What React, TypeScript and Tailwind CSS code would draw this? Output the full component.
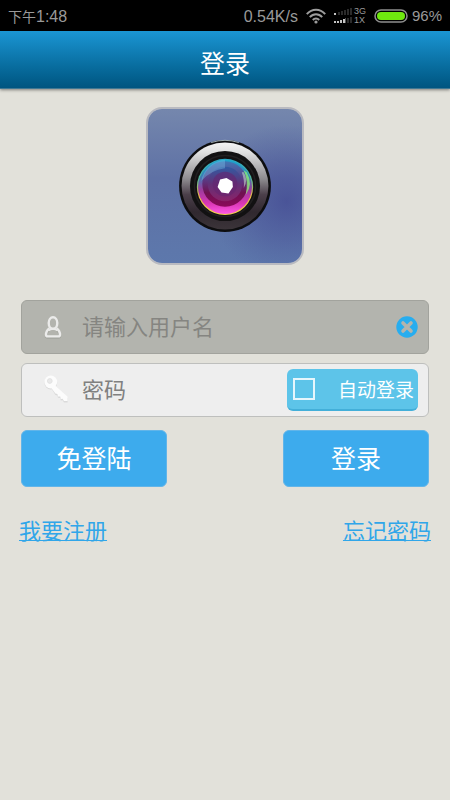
import React, { useState } from 'react';

const WifiIcon: React.FC = () => (
  <svg width="20" height="16" viewBox="0 0 20 16" fill="none" stroke="#9d9d9d" strokeWidth="2" aria-hidden="true">
    <path d="M0.8 6.2C6 0.4 14 0.4 19.2 6.2" />
    <path d="M3.8 9.2C7.4 5.2 12.6 5.2 16.2 9.2" />
    <path d="M6.8 12C8.6 10 11.4 10 13.2 12" />
    <circle cx="10" cy="14" r="1.6" fill="#9d9d9d" stroke="none" />
  </svg>
);

const SignalIcon: React.FC = () => (
  <svg width="18" height="16" viewBox="0 0 18 16" aria-hidden="true">
    <g fill="#2b2b2b">
      <rect x="4" y="4" width="2" height="3" />
      <rect x="7" y="3" width="2" height="4" />
      <rect x="10" y="2" width="2" height="5" />
      <rect x="13" y="1" width="2" height="6" />
      <rect x="16" y="0" width="2" height="7" />
      <rect x="13" y="10" width="2" height="5" />
      <rect x="16" y="9" width="2" height="6" />
    </g>
    <g fill="#c4c4c4">
      <rect x="0" y="5" width="2" height="2" />
      <rect x="0" y="13" width="2" height="2" />
      <rect x="3" y="13" width="2" height="2" />
      <rect x="6" y="12" width="2" height="3" />
      <rect x="9" y="11" width="2" height="4" />
    </g>
    <rect x="11" y="10" width="1" height="5" fill="#555555" />
  </svg>
);

const BatteryIcon: React.FC = () => (
  <svg width="34" height="14" viewBox="0 0 34 14" aria-hidden="true">
    <rect x="1" y="1" width="32" height="12" rx="6" fill="#000000" stroke="#8f8f8f" strokeWidth="1.5" />
    <rect x="3" y="3" width="28" height="8" rx="4" fill="#6fe80f" />
  </svg>
);

const StatusBar: React.FC = () => (
  <div className="flex h-[31px] items-center justify-between bg-black px-2 text-base text-[#9a9a9a]">
    <div className="flex items-center pt-0.5">
      <span className="text-sm">下午</span>
      <span>1:48</span>
    </div>
    <div className="flex items-center">
      <span className="mr-2 pt-0.5 text-base">0.54K/s</span>
      <WifiIcon />
      <span className="ml-2">
        <SignalIcon />
      </span>
      <span className="ml-0.5 mr-2 flex flex-col text-[9px] leading-[9px]">
        <span>3G</span>
        <span>1X</span>
      </span>
      <BatteryIcon />
      <span className="ml-1 pt-0.5 text-[15px]">96%</span>
    </div>
  </div>
);

const LensLogo: React.FC = () => (
  <svg
    viewBox="0 0 156 156"
    className="block size-[158px] rounded-2xl border-2 border-[#b9bac0]"
    role="img"
    aria-label="Logo"
  >
    <defs>
      <linearGradient id="backdrop" x1="0" y1="0" x2="0" y2="1">
        <stop offset="0" stopColor="#7587ad" />
        <stop offset="0.45" stopColor="#5e71a5" />
        <stop offset="1" stopColor="#5d78ac" />
      </linearGradient>
      <radialGradient id="dusk" cx="0.9" cy="0.6" r="0.5">
        <stop offset="0" stopColor="#434a93" stopOpacity="0.75" />
        <stop offset="0.5" stopColor="#474f96" stopOpacity="0.4" />
        <stop offset="1" stopColor="#4c5a9a" stopOpacity="0" />
      </radialGradient>
      <linearGradient id="metal" x1="0" y1="0" x2="0" y2="1">
        <stop offset="0" stopColor="#f4f4f4" />
        <stop offset="0.12" stopColor="#dedede" />
        <stop offset="0.42" stopColor="#8d8b8f" />
        <stop offset="0.6" stopColor="#4b3f4a" />
        <stop offset="0.8" stopColor="#30282f" />
        <stop offset="1" stopColor="#3b3439" />
      </linearGradient>
      <linearGradient id="rim" x1="0" y1="0" x2="0" y2="1">
        <stop offset="0" stopColor="#29a5c4" />
        <stop offset="0.35" stopColor="#51b99a" />
        <stop offset="0.65" stopColor="#e6b64b" />
        <stop offset="1" stopColor="#f0d34a" />
      </linearGradient>
      <linearGradient id="glass" x1="0" y1="0" x2="0" y2="1">
        <stop offset="0" stopColor="#1ba6cf" />
        <stop offset="0.3" stopColor="#397eb5" />
        <stop offset="0.55" stopColor="#9b3c9c" />
        <stop offset="0.8" stopColor="#d936b4" />
        <stop offset="1" stopColor="#ff59e5" />
      </linearGradient>
      <linearGradient id="inner" x1="0" y1="0" x2="0" y2="1">
        <stop offset="0" stopColor="#4277b5" />
        <stop offset="0.4" stopColor="#5b3a85" />
        <stop offset="0.7" stopColor="#701050" />
        <stop offset="1" stopColor="#8b0a5b" />
      </linearGradient>
      <linearGradient id="core" x1="0" y1="0" x2="0" y2="1">
        <stop offset="0" stopColor="#315ba3" />
        <stop offset="0.5" stopColor="#623177" />
        <stop offset="1" stopColor="#8a2269" />
      </linearGradient>
    </defs>
    <rect width="156" height="156" fill="url(#backdrop)" />
    <rect width="156" height="156" fill="url(#dusk)" />
    <circle cx="78" cy="78" r="46.5" fill="#0d0d0f" />
    <path d="M64 34Q78 29.5 92 34" fill="none" stroke="#c3d2d8" strokeWidth="0.8" />
    <circle cx="78" cy="78" r="44" fill="url(#metal)" />
    <circle cx="78" cy="78" r="35.5" fill="#121112" />
    <circle cx="78" cy="78" r="31" fill="none" stroke="#211f20" strokeWidth="1.5" />
    <circle cx="78" cy="79" r="28.5" fill="url(#rim)" />
    <circle cx="78" cy="79" r="27.3" fill="url(#glass)" />
    <circle cx="78" cy="76" r="23" fill="url(#inner)" />
    <circle cx="78" cy="76" r="17.5" fill="url(#core)" />
    <circle cx="78" cy="76" r="12.5" fill="#66256f" opacity="0.6" />
    <path d="M78 51.5A26 26 0 0 0 54 73Q63 62 78 60Z" fill="#78bfe6" opacity="0.4" />
    <path d="M97 62Q102 73 99 87Q107 76 100 64Z" fill="#8dff70" opacity="0.7" />
    <path d="M95 64Q98 72 97 80Q102 72 97 64Z" fill="#d9f7d9" opacity="0.5" />
    <path d="M79.5 70L85.5 73.5L86 79L81.5 85.5L74.5 84.5L70.5 79L73 71.5Z" fill="#ffffff" />
  </svg>
);

const UserIcon: React.FC = () => (
  <svg width="18" height="24" viewBox="0 0 18 24" fill="none" strokeLinejoin="round" aria-hidden="true">
    <g stroke="#a3a49e" strokeWidth="2.4" transform="translate(0 1)">
      <path d="M6 13.4C3.4 15 2 17 2 20C2 21 2.5 21.6 3.6 21.6H14.4C15.5 21.6 16 21 16 20C16 17 14.6 15 12 13.4" />
    </g>
    <g stroke="#ebebea" strokeWidth="2.4">
      <ellipse cx="9" cy="8" rx="4.3" ry="5.8" />
      <path d="M5.6 13.2C3.2 14.8 2 17 2 19.8C2 20.9 2.5 21.4 3.6 21.4H14.4C15.5 21.4 16 20.9 16 19.8C16 17 14.8 14.8 12.4 13.2" />
      <path d="M4.4 15.6C7 13.6 11 13.6 13.6 15.6" strokeWidth="1.8" />
    </g>
  </svg>
);

const KeyIcon: React.FC = () => (
  <svg width="26" height="30" viewBox="0 0 26 30" aria-hidden="true">
    <path
      d="M11 12L23.6 23V27.4H20L18.6 25.2L16.8 25.4L16.2 23L14 22.8L13.4 20.4L11.4 20L8 14.4Z"
      fill="#dadada"
    />
    <circle cx="6.8" cy="8" r="6.4" fill="#dadada" />
    <path
      d="M11 10.6L23.6 21.8V26H20L18.6 23.8L16.8 24L16.2 21.6L14 21.4L13.4 19L11.4 18.6L7 12.4Z"
      fill="#fcfcfc"
    />
    <circle cx="6.8" cy="7" r="6.4" fill="#fcfcfc" />
    <circle cx="5.8" cy="6" r="2.4" fill="#e9e9e9" stroke="#dedede" strokeWidth="0.8" />
  </svg>
);

const ClearIcon: React.FC = () => (
  <svg width="22" height="22" viewBox="0 0 22 22" aria-hidden="true">
    <circle cx="11" cy="11" r="10.7" fill="#27adef" />
    <path d="M7 7L15 15M15 7L7 15" stroke="#b3b4ae" strokeWidth="3.6" strokeLinecap="round" />
  </svg>
);

const App: React.FC = () => {
  const [username, setUsername] = useState('');
  const [password, setPassword] = useState('');
  const [autoLogin, setAutoLogin] = useState(false);

  const handleSubmit = (e: React.FormEvent) => {
    e.preventDefault();
  };

  return (
    <div className="min-h-screen bg-[#e2e1da] font-['Liberation_Sans','Noto_Sans_CJK_SC',sans-serif]">
      <StatusBar />
      <header className="flex h-[58px] items-center justify-center border-b border-[#3f7893] bg-linear-to-b from-[#1a96d4] to-[#005580] pt-2 shadow-[0_1px_3px_rgba(0,0,0,0.45)]">
        <h1 className="text-[25px] leading-8 text-white">登录</h1>
      </header>

      <main className="px-[21px] pt-[18px]">
        <div className="flex justify-center">
          <LensLogo />
        </div>

        <form onSubmit={handleSubmit} className="mt-[35px]">
          <div className="flex h-[54px] items-center rounded-md border border-[#a2a39d] bg-[#b3b4ae] pl-[22px] pr-2.5">
            <label htmlFor="username" className="flex w-[38px] shrink-0" aria-label="用户名">
              <UserIcon />
            </label>
            <input
              id="username"
              type="text"
              placeholder="请输入用户名"
              className="min-w-0 flex-1 bg-transparent text-[22px] text-[#444444] outline-none placeholder:text-[#858581]"
              value={username}
              onChange={(e) => setUsername(e.target.value)}
            />
            <button type="button" aria-label="清除" onClick={() => setUsername('')}>
              <ClearIcon />
            </button>
          </div>

          <div className="mt-[9px] flex h-[54px] items-center rounded-md border border-[#bebfbd] bg-[#eeeeee] pl-[22px] pr-2.5">
            <label htmlFor="password" className="flex w-[38px] shrink-0" aria-label="密码">
              <KeyIcon />
            </label>
            <input
              id="password"
              type="password"
              placeholder="密码"
              className="min-w-0 flex-1 bg-transparent text-[22px] text-[#444444] outline-none placeholder:text-[#808080]"
              value={password}
              onChange={(e) => setPassword(e.target.value)}
            />
            <label className="flex h-[42px] w-[131px] shrink-0 items-center justify-between rounded-md border-b-2 border-[#43afd9] bg-[#5dc4e9] pl-1.5 pr-1 text-[19px] text-white">
              <input
                type="checkbox"
                className="size-[22px] appearance-none border-2 border-[#e6f6fc] checked:bg-white"
                checked={autoLogin}
                onChange={(e) => setAutoLogin(e.target.checked)}
              />
              <span className="pt-1">自动登录</span>
            </label>
          </div>

          <div className="mt-[13px] flex justify-between text-[25px] text-white">
            <button type="button" className="h-[57px] w-[146px] rounded-md border border-[#62b5e9] bg-[#3dabed] pt-0.5">
              免登陆
            </button>
            <button type="submit" className="h-[57px] w-[146px] rounded-md border border-[#62b5e9] bg-[#3dabed] pt-0.5">
              登录
            </button>
          </div>
        </form>

        <nav className="-mx-0.5 mt-[29px] flex justify-between text-[22px] leading-8 text-[#30a6e9] underline decoration-1">
          <a href="#register">我要注册</a>
          <a href="#forgot">忘记密码</a>
        </nav>
      </main>
    </div>
  );
};

export default App;
